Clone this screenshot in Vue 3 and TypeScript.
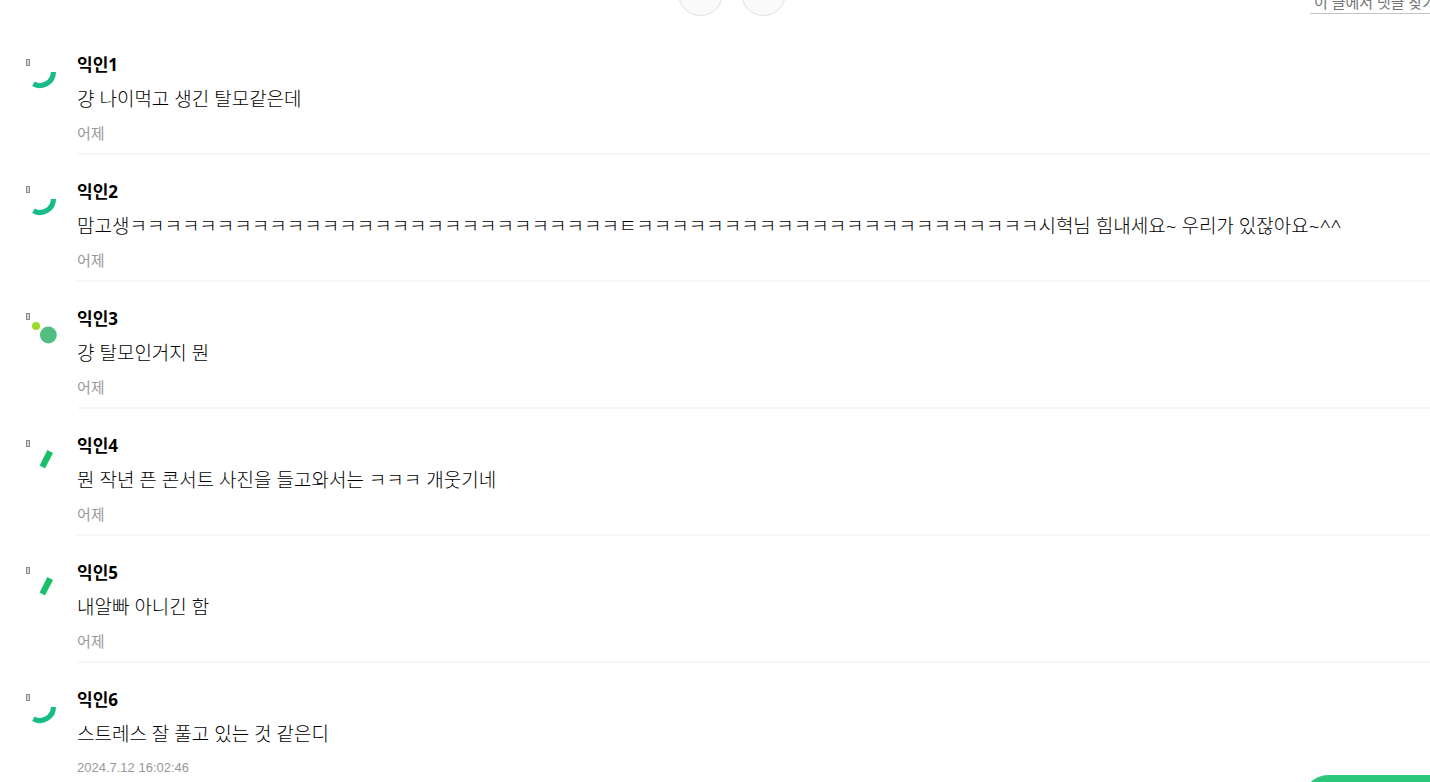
<script setup lang="ts">
import { ref } from 'vue'

type Mark = 'arc' | 'dots' | 'bar'

interface Comment {
  id: number
  name: string
  text: string
  time: string
  dated?: boolean
  mark: Mark
}

const query = ref<string>('')

const comments: Comment[] = [
  { id: 1, name: '익인1', text: '걍 나이먹고 생긴 탈모같은데', time: '어제', mark: 'arc' },
  {
    id: 2,
    name: '익인2',
    text: '맘고생' + 'ㅋ'.repeat(28) + 'ㅌ' + 'ㅋ'.repeat(23) + '시혁님 힘내세요~ 우리가 있잖아요~^^',
    time: '어제',
    mark: 'arc',
  },
  { id: 3, name: '익인3', text: '걍 탈모인거지 뭔', time: '어제', mark: 'dots' },
  { id: 4, name: '익인4', text: '뭔 작년 픈 콘서트 사진을 들고와서는 ㅋㅋㅋ 개웃기네', time: '어제', mark: 'bar' },
  { id: 5, name: '익인5', text: '내알빠 아니긴 함', time: '어제', mark: 'bar' },
  { id: 6, name: '익인6', text: '스트레스 잘 풀고 있는 것 같은디', time: '2024.7.12 16:02:46', dated: true, mark: 'arc' },
]
</script>

<template>
  <div class="page">
    <header class="toolbar">
      <div class="rounds">
        <button type="button" class="round" aria-label="추천"></button>
        <button type="button" class="round" aria-label="스크랩"></button>
      </div>
      <input
        v-model="query"
        class="search"
        type="text"
        aria-label="이 글에서 댓글 찾기"
        placeholder="이 글에서 댓글 찾기"
      />
    </header>

    <main>
      <ul class="comments">
        <li v-for="comment in comments" :key="comment.id" class="comment">
          <svg class="avatar" viewBox="0 0 36 36" aria-hidden="true">
            <rect x="2.5" y="3.5" width="3" height="6" fill="#d4d4d4" stroke="#8c8c8c" />
            <path
              v-if="comment.mark === 'arc'"
              d="M29.4 16A13.4 13.4 0 0 1 9.4 27.7"
              fill="none"
              stroke="#18bc88"
              stroke-width="5.2"
            />
            <template v-else-if="comment.mark === 'dots'">
              <circle cx="12" cy="16" r="4" fill="#9bdb2c" />
              <circle cx="24.4" cy="25" r="8.4" fill="#52bd80" />
            </template>
            <path v-else d="M23.4 13L29 16L21 31.4L15.6 28.4Z" fill="#18c06a" />
          </svg>
          <article class="body">
            <h2 class="name">{{ comment.name }}</h2>
            <p class="text">{{ comment.text }}</p>
            <time class="time" :class="{ dated: comment.dated }">{{ comment.time }}</time>
          </article>
        </li>
      </ul>
    </main>

    <button type="button" class="floating" aria-label="댓글 쓰기"></button>
  </div>
</template>

<style>
body {
  overflow: hidden;
  background: #fff;
}
</style>

<style scoped>
.page {
  width: calc(100% + 34px);
  font-family: "Noto Sans", "Noto Sans CJK KR", sans-serif;
  color: #000;
}

.toolbar {
  display: grid;
  grid-template-columns: 1fr auto 1fr;
  grid-template-rows: 16px;
  align-items: end;
  margin-bottom: 12px;
}

.rounds {
  grid-column: 2;
  display: flex;
  gap: 18px;
}

.round {
  width: 45px;
  height: 45px;
  padding: 0;
  border: 1px solid #e0e0e0;
  border-radius: 50%;
  background: #fafafa;
}

.search {
  box-sizing: border-box;
  justify-self: end;
  width: 154px;
  height: 24px;
  margin-bottom: 2px;
  padding: 0 4px;
  border: 0;
  border-bottom: 1px solid #c4c4c4;
  background: transparent;
  font-family: inherit;
  font-size: 15px;
  outline: none;
}

.search::placeholder {
  color: #757575;
}

.comments {
  margin: 0;
  padding: 0 0 0 24px;
  list-style: none;
}

.comment {
  display: grid;
  grid-template-columns: 36px 1fr;
  column-gap: 17px;
}

.avatar {
  width: 36px;
  height: 36px;
  margin-top: 28px;
}

.body {
  padding: 20px 0 3px;
  border-bottom: 2px solid #f6f6f6;
}

.name,
.text,
.time {
  display: block;
  margin: 0;
  line-height: 34px;
}

.name {
  font-size: 17px;
  font-weight: 700;
}

.text {
  font-size: 19px;
  font-weight: 300;
  white-space: nowrap;
}

.time {
  font-size: 15px;
  color: #999;
}

.dated {
  font-family: "Liberation Sans", "Noto Sans CJK KR", sans-serif;
  font-size: 13px;
}

.floating {
  position: fixed;
  right: -33px;
  bottom: -43px;
  width: 160px;
  height: 50px;
  padding: 0;
  border: 0;
  border-radius: 25px;
  background: #2bc677;
}
</style>
